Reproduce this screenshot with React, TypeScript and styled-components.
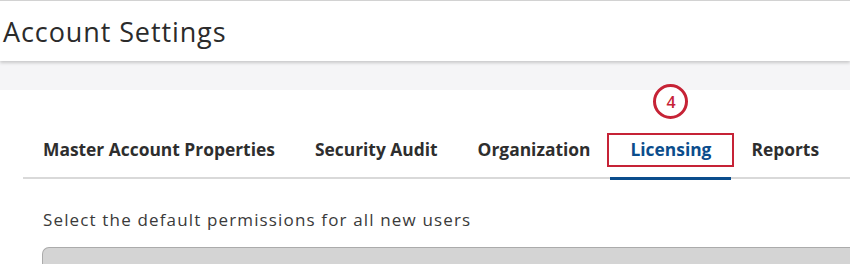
import React from "react";
import styled, { createGlobalStyle } from "styled-components";

const Global = createGlobalStyle`
  html, body { margin: 0; padding: 0; background: #ffffff; }
  body { font-family: "Open Sans", "Noto Sans", sans-serif; overflow: hidden; }
`;

const Page = styled.div`
  width: 850px;
  height: 264px;
  overflow: hidden;
  background: #ffffff;
  display: flex;
  flex-direction: column;
  & > * { flex-shrink: 0; }
`;

const Header = styled.header`
  position: relative;
  z-index: 1;
  height: 60px;
  border-top: 1px solid #d2d2d2;
  background: #ffffff;
  box-shadow: 0 2px 3px rgba(0, 0, 0, 0.18);
  display: flex;
  align-items: center;
  padding-left: 3px;
`;

const Title = styled.h1`
  margin: 0;
  font-size: 27px;
  font-weight: 400;
  color: #2b2b2b;
  letter-spacing: 0.9px;
`;

const Band = styled.div`
  height: 29px;
  background: #f5f5f7;
`;

const Content = styled.div`
  padding: 47px 0 0 23px;
  display: flex;
  flex-direction: column;
`;

const TabBar = styled.nav`
  display: flex;
  border-bottom: 2px solid #d9d9d9;
`;

const Tab = styled.div<{ $active?: boolean }>`
  position: relative;
  padding: 0 20px 16px;
  font-size: 17.4px;
  line-height: 24px;
  font-weight: 700;
  color: ${(p) => (p.$active ? "#0b4d8c" : "#2e2e2e")};
  white-space: nowrap;
  &::after {
    content: "";
    display: ${(p) => (p.$active ? "block" : "none")};
    position: absolute;
    left: 0;
    right: 0;
    bottom: -3px;
    height: 3px;
    background: #0b4d8c;
  }
`;

const Highlight = styled.span`
  position: absolute;
  left: -3px;
  top: -4px;
  width: 127px;
  height: 34px;
  box-sizing: border-box;
  border: 2px solid #c62336;
`;

const StepBadge = styled.span`
  position: absolute;
  left: 43px;
  top: -53px;
  width: 35px;
  height: 35px;
  box-sizing: border-box;
  border: 3px solid #c62336;
  border-radius: 50%;
  display: flex;
  align-items: center;
  justify-content: center;
  font-size: 16px;
  font-weight: 600;
  color: #c62336;
  background: #ffffff;
`;

const Body = styled.div`
  padding: 29px 0 0 20px;
  display: flex;
  flex-direction: column;
`;

const Prompt = styled.p`
  margin: 0;
  font-size: 17px;
  line-height: 24px;
  color: #3a3a3a;
  letter-spacing: 1.15px;
`;

const SelectBox = styled.div`
  margin-top: 15px;
  margin-left: -1px;
  height: 60px;
  background: #d4d4d4;
  border: 1px solid #ababab;
  border-right: none;
  border-bottom: none;
  border-top-left-radius: 7px;
`;

const tabs = [
  "Master Account Properties",
  "Security Audit",
  "Organization",
  "Licensing",
  "Reports",
];

export default function App() {
  return (
    <Page>
      <Global />
      <Header>
        <Title>Account Settings</Title>
      </Header>
      <Band />
      <Content>
        <TabBar>
          {tabs.map((t) => (
            <Tab key={t} $active={t === "Licensing"}>
              {t === "Licensing" && (
                <>
                  <StepBadge>4</StepBadge>
                  <Highlight />
                </>
              )}
              {t}
            </Tab>
          ))}
        </TabBar>
        <Body>
          <Prompt>Select the default permissions for all new users</Prompt>
          <SelectBox />
        </Body>
      </Content>
    </Page>
  );
}
